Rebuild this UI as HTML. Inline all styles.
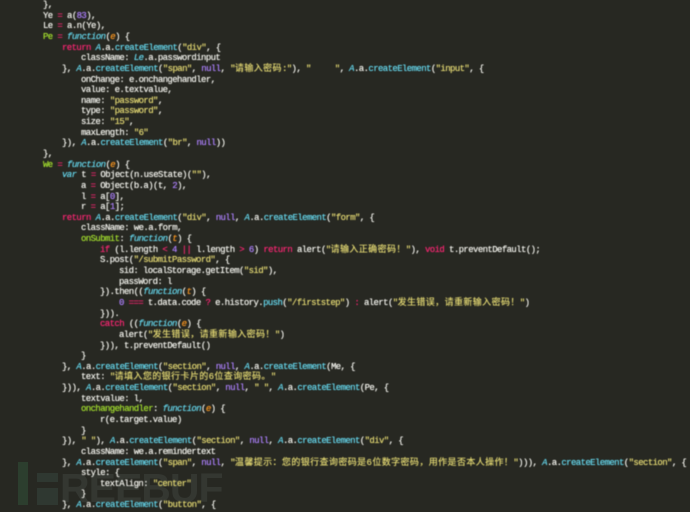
<!DOCTYPE html>
<html><head><meta charset="utf-8"><style>
html,body{margin:0;padding:0}
body{width:690px;height:512px;background:#272822;overflow:hidden;position:relative;font-family:"Liberation Mono","Noto Sans CJK SC",monospace;font-size:9px;letter-spacing:-0.6px;color:#f8f8f2}
.c{position:absolute;left:0;top:0;filter:blur(0.4px)}
.l{position:absolute;white-space:pre;line-height:10.6px;height:10.6px;text-shadow:0 0 0.4px currentColor}
.k{color:#f92672}.f{color:#66d9ef;font-style:italic}.s{color:#e6db74}.n{color:#ae81ff}.g{color:#a6e22e}.p{color:#fd971f;font-style:italic}
.j{letter-spacing:0.4px}
.wm{position:absolute;opacity:.65}
</style></head><body>
<div class="wm" style="left:18px;top:462px;width:10px;height:43px;background:#2f4a36"></div>
<div class="wm" style="left:37px;top:473px;width:21px;height:9px;background:#34413a"></div>
<div class="wm" style="left:37px;top:488px;width:21px;height:17px;background:#34413a"></div>
<div class="wm" style="left:60px;top:470px;font:bold 41px/36px 'Liberation Sans',sans-serif;letter-spacing:-1px;color:#3b3f3a">REEBUF</div>
<div class="c">
<div class="l" style="top:0px;left:43px">},</div>
<div class="l" style="top:10.6px;left:43px">Ye <span class="k">=</span> a(<span class="n">83</span>),</div>
<div class="l" style="top:21.3px;left:43px">Le <span class="k">=</span> a.n(Ye),</div>
<div class="l" style="top:31.9px;left:43px"><span class="g">Pe</span> <span class="k">=</span> <span class="f">function</span>(<span class="p">e</span>) {</div>
<div class="l" style="top:42.6px;left:62px"><span class="k">return</span> <span class="f">A</span>.a.<span class="f" style="font-style:normal">createElement</span>(<span class="s">"div"</span>, {</div>
<div class="l" style="top:53.2px;left:81px">className: <span class="f">Le</span>.a.passwordinput</div>
<div class="l" style="top:63.8px;left:62px">}, <span class="f">A</span>.a.<span class="f" style="font-style:normal">createElement</span>(<span class="s">"span"</span>, <span class="n">null</span>, <span class="s">"<span class="j">请输入密码</span>:"</span>), <span class="s">"     "</span>, <span class="f">A</span>.a.<span class="f" style="font-style:normal">createElement</span>(<span class="s">"input"</span>, {</div>
<div class="l" style="top:74.5px;left:81px">onChange: e.onchangehandler,</div>
<div class="l" style="top:85.1px;left:81px">value: e.textvalue,</div>
<div class="l" style="top:95.8px;left:81px">name: <span class="s">"password"</span>,</div>
<div class="l" style="top:106.4px;left:81px">type: <span class="s">"password"</span>,</div>
<div class="l" style="top:117px;left:81px">size: <span class="s">"15"</span>,</div>
<div class="l" style="top:127.7px;left:81px">maxLength: <span class="s">"6"</span></div>
<div class="l" style="top:138.3px;left:62px">}), <span class="f">A</span>.a.<span class="f" style="font-style:normal">createElement</span>(<span class="s">"br"</span>, <span class="n">null</span>))</div>
<div class="l" style="top:149px;left:43px">},</div>
<div class="l" style="top:159.6px;left:43px"><span class="g">We</span> <span class="k">=</span> <span class="f">function</span>(<span class="p">e</span>) {</div>
<div class="l" style="top:170.2px;left:62px"><span class="f">var</span> t <span class="k">=</span> Object(n.useState)(<span class="s">""</span>),</div>
<div class="l" style="top:180.9px;left:81px">a <span class="k">=</span> Object(b.a)(t, <span class="n">2</span>),</div>
<div class="l" style="top:191.5px;left:81px">l <span class="k">=</span> a[<span class="n">0</span>],</div>
<div class="l" style="top:202.2px;left:81px">r <span class="k">=</span> a[<span class="n">1</span>];</div>
<div class="l" style="top:212.8px;left:62px"><span class="k">return</span> <span class="f">A</span>.a.<span class="f" style="font-style:normal">createElement</span>(<span class="s">"div"</span>, <span class="n">null</span>, <span class="f">A</span>.a.<span class="f" style="font-style:normal">createElement</span>(<span class="s">"form"</span>, {</div>
<div class="l" style="top:223.4px;left:81px">className: we.a.form,</div>
<div class="l" style="top:234.1px;left:81px"><span class="g">onSubmit</span>: <span class="f">function</span>(<span class="p">t</span>) {</div>
<div class="l" style="top:244.7px;left:100px"><span class="k">if</span> (l.length <span class="k">&lt;</span> <span class="n">4</span> <span class="k">||</span> l.length <span class="k">&gt;</span> <span class="n">6</span>) <span class="k">return</span> alert(<span class="s">"<span class="j">请输入正确密码！</span>"</span>), <span class="k">void</span> t.preventDefault();</div>
<div class="l" style="top:255.4px;left:100px">S.post(<span class="s">"/submitPassword"</span>, {</div>
<div class="l" style="top:266px;left:119px">sid: localStorage.getItem(<span class="s">"sid"</span>),</div>
<div class="l" style="top:276.6px;left:119px">passWord: l</div>
<div class="l" style="top:287.3px;left:100px">}).then((<span class="f">function</span>(<span class="p">t</span>) {</div>
<div class="l" style="top:297.9px;left:119px"><span class="n">0</span> <span class="k">===</span> t.data.code <span class="k">?</span> e.history.<span class="f" style="font-style:normal">push</span>(<span class="s">"/firststep"</span>) <span class="k">:</span> alert(<span class="s">"<span class="j">发生错误，请重新输入密码！</span>"</span>)</div>
<div class="l" style="top:308.6px;left:100px">})).</div>
<div class="l" style="top:319.2px;left:100px"><span class="k">catch</span> ((<span class="f">function</span>(<span class="p">e</span>) {</div>
<div class="l" style="top:329.8px;left:119px">alert(<span class="s">"<span class="j">发生错误，请重新输入密码！</span>"</span>)</div>
<div class="l" style="top:340.5px;left:100px">})), t.preventDefault()</div>
<div class="l" style="top:351.1px;left:81px">}</div>
<div class="l" style="top:361.8px;left:62px">}, <span class="f">A</span>.a.<span class="f" style="font-style:normal">createElement</span>(<span class="s">"section"</span>, <span class="n">null</span>, <span class="f">A</span>.a.<span class="f" style="font-style:normal">createElement</span>(Me, {</div>
<div class="l" style="top:372.4px;left:81px">text: <span class="s">"<span class="j">请填入您的银行卡片的6位查询密码。</span>"</span></div>
<div class="l" style="top:383px;left:62px">})), <span class="f">A</span>.a.<span class="f" style="font-style:normal">createElement</span>(<span class="s">"section"</span>, <span class="n">null</span>, <span class="s">" "</span>, <span class="f">A</span>.a.<span class="f" style="font-style:normal">createElement</span>(Pe, {</div>
<div class="l" style="top:393.7px;left:81px">textvalue: l,</div>
<div class="l" style="top:404.3px;left:81px"><span class="g">onchangehandler</span>: <span class="f">function</span>(<span class="p">e</span>) {</div>
<div class="l" style="top:415px;left:100px">r(e.target.value)</div>
<div class="l" style="top:425.6px;left:81px">}</div>
<div class="l" style="top:436.2px;left:62px">}), <span class="s">" "</span>), <span class="f">A</span>.a.<span class="f" style="font-style:normal">createElement</span>(<span class="s">"section"</span>, <span class="n">null</span>, <span class="f">A</span>.a.<span class="f" style="font-style:normal">createElement</span>(<span class="s">"div"</span>, {</div>
<div class="l" style="top:446.9px;left:81px">className: we.a.remindertext</div>
<div class="l" style="top:457.5px;left:62px">}, <span class="f">A</span>.a.<span class="f" style="font-style:normal">createElement</span>(<span class="s">"span"</span>, <span class="n">null</span>, <span class="s">"<span class="j">温馨提示：您的银行查询密码是6位数字密码，用作是否本人操作！</span>"</span>))), <span class="f">A</span>.a.<span class="f" style="font-style:normal">createElement</span>(<span class="s">"section"</span>, {</div>
<div class="l" style="top:468.2px;left:81px">style: {</div>
<div class="l" style="top:478.8px;left:100px">textAlign: <span class="s">"center"</span></div>
<div class="l" style="top:489.4px;left:81px">}</div>
<div class="l" style="top:500.1px;left:62px">}, <span class="f">A</span>.a.<span class="f" style="font-style:normal">createElement</span>(<span class="s">"button"</span>, {</div>
</div>
</body></html>
